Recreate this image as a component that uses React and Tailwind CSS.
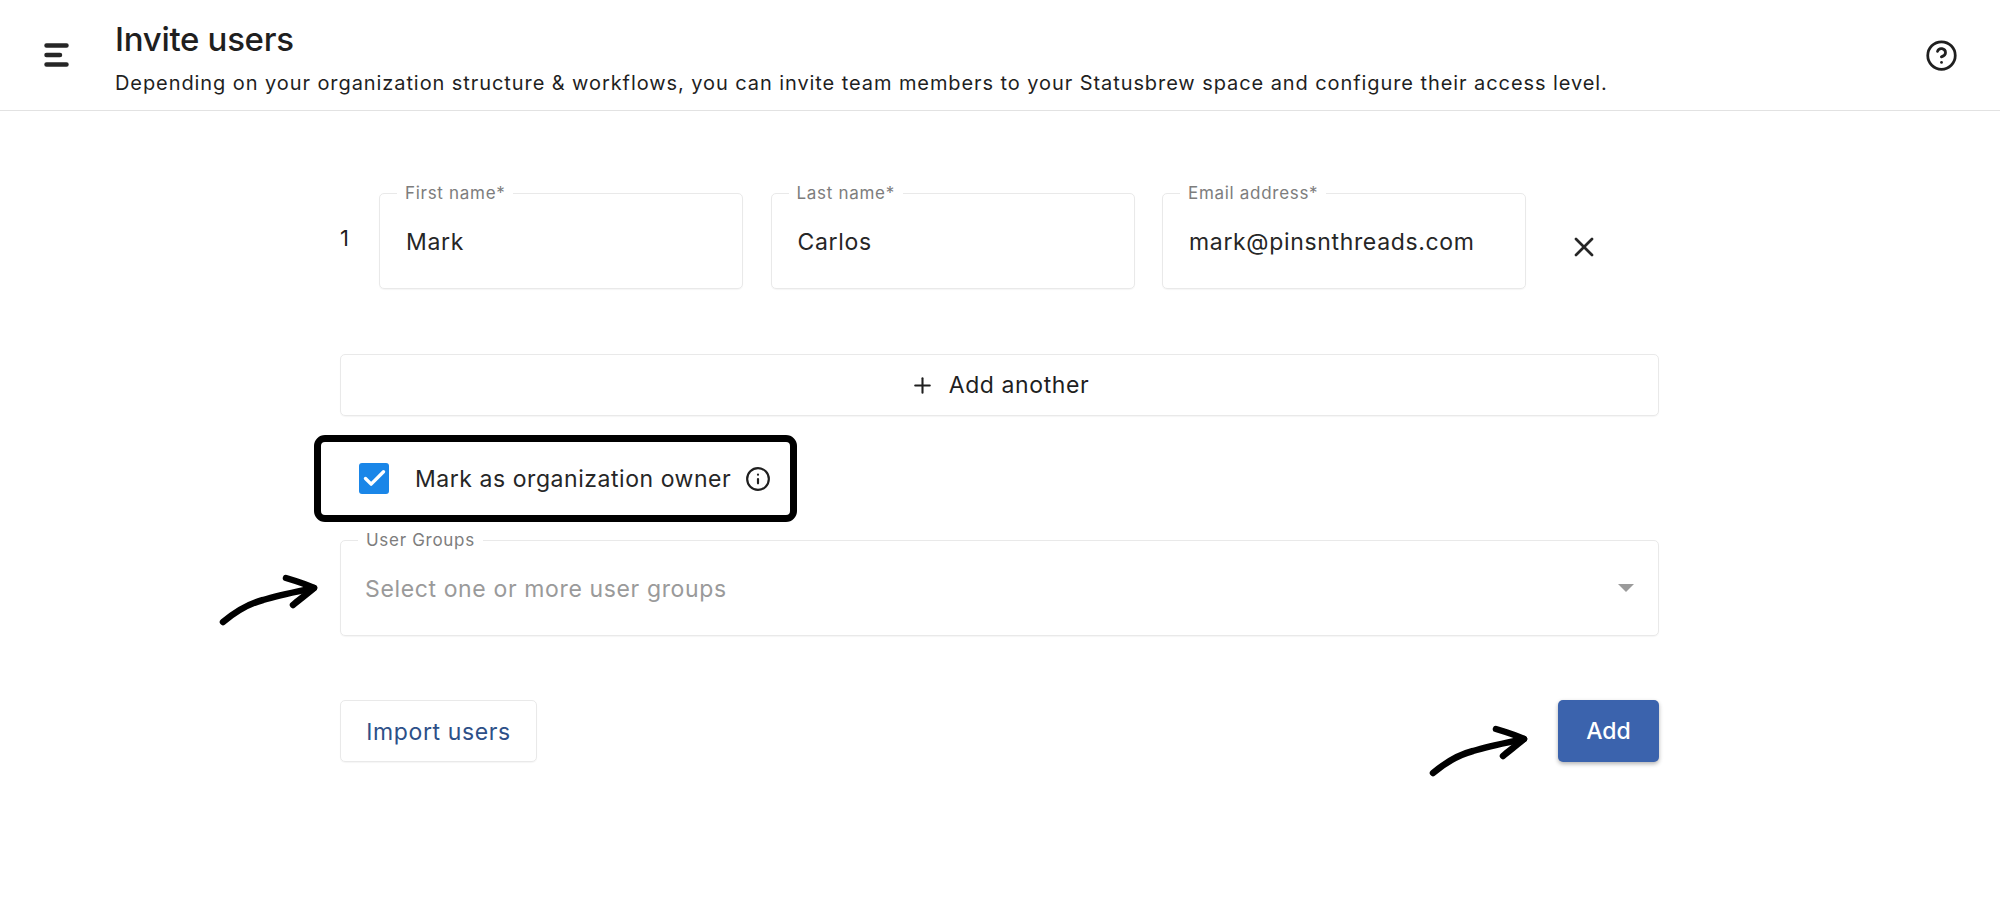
import { X, Plus, CircleHelp, Info, Check } from 'lucide-react';

const Arrow = ({ className }) => (
    <svg className={className} width="100" height="54" viewBox="0 0 100 54" fill="none" stroke="#000" strokeWidth="6.5" strokeLinecap="round" strokeLinejoin="round">
        <path d="M4 49 C16 39 28 31 44 27 C60 22 76 19 95 15" />
        <path d="M67 5 C77 8 87 11 95 15 C88 21 80 27 74 32" />
    </svg>
);

const Field = ({ label, value }) => (
    <div className="relative h-[96px] w-[364px] rounded-[5px] border border-[#e9e9e9] shadow-[0_1px_1px_rgba(0,0,0,0.04)]">
        <label className="absolute -top-[11px] left-[17px] bg-white px-[8px] text-[17px] leading-[20px] tracking-[0.7px] text-[#7d7d7d]">{label}</label>
        <input readOnly value={value} className="h-full w-full bg-transparent pl-[26px] pt-[2px] text-[23px] tracking-[0.66px] text-[#262626] outline-none" />
    </div>
);

const App = () => {
    return (
        <div className="min-h-screen bg-white font-['Inter',sans-serif] text-[#1f1f1f]">
            <header className="flex h-[111px] items-center justify-between border-b border-[#e2e2e2] pl-[44px] pr-[42px]">
                <div className="flex items-center">
                    <svg width="25" height="24" viewBox="0 0 25 24" className="mr-[46px]" fill="none" stroke="#262626" strokeWidth="4.5" strokeLinecap="round">
                        <path d="M2.5 2.5 H22.5 M2.5 12 H16 M2.5 21.5 H22.5" />
                    </svg>
                    <div className="mt-[4px]">
                        <h1 className="text-[33px] font-medium leading-[40px] tracking-[-0.3px]">Invite users</h1>
                        <p className="mt-[12px] text-[20px] leading-[24px] tracking-[0.92px]">Depending on your organization structure &amp; workflows, you can invite team members to your Statusbrew space and configure their access level.</p>
                    </div>
                </div>
                <CircleHelp size={33} strokeWidth={2} className="text-[#1f1f1f]" />
            </header>

            <main className="w-[1659px] pl-[340px] pt-[82px]">
                <div className="flex items-start">
                    <span className="mt-[31px] w-[39px] text-[22px] leading-[28px]">1</span>
                    <div className="flex gap-[27.5px]">
                        <Field label="First name*" value="Mark" />
                        <Field label="Last name*" value="Carlos" />
                        <Field label="Email address*" value="mark@pinsnthreads.com" />
                    </div>
                    <X size={32} strokeWidth={2} className="ml-[42px] mt-[38px] text-[#262626]" />
                </div>

                <button className="mt-[65px] flex h-[62px] w-full items-center justify-center rounded-[5px] border border-[#e9e9e9] pt-[1px] text-[23px] tracking-[0.6px] shadow-[0_1px_1px_rgba(0,0,0,0.04)]">
                    <Plus size={25} strokeWidth={2} className="mr-[14px]" />
                    Add another
                </button>

                <div className="-ml-[26px] mt-[19px] flex h-[87px] w-[483px] items-center rounded-[11px] border-[7px] border-black pl-[38px]">
                    <span className="flex h-[31px] w-[30px] items-center justify-center rounded-[3px] bg-[#1a86e8]">
                        <Check size={27} strokeWidth={3} className="text-white" />
                    </span>
                    <span className="ml-[26px] text-[23px] leading-[28px] tracking-[0.55px] text-[#262626]">Mark as organization owner</span>
                    <Info size={26} strokeWidth={2} className="ml-[14px]" />
                </div>

                <div className="relative mt-[18px] flex h-[96px] items-center justify-between rounded-[5px] border border-[#e9e9e9] pl-[24px] pr-[24px] shadow-[0_1px_1px_rgba(0,0,0,0.04)]">
                    <label className="absolute -top-[11px] left-[17px] bg-white px-[8px] text-[17px] leading-[20px] tracking-[0.7px] text-[#7d7d7d]">User Groups</label>
                    <span className="pt-[2px] text-[23px] tracking-[0.63px] text-[#9a9a9a]">Select one or more user groups</span>
                    <span className="h-0 w-0 border-x-[8px] border-t-[8px] border-x-transparent border-t-[#9b9b9b]" />
                    <Arrow className="absolute -left-[122px] top-[32px]" />
                </div>

                <div className="mt-[64px] flex items-center justify-between">
                    <button className="h-[62px] w-[197px] rounded-[5px] border border-[#e9e9e9] pt-[2px] text-[23px] tracking-[0.6px] text-[#2d5088] shadow-[0_1px_1px_rgba(0,0,0,0.04)]">Import users</button>
                    <div className="relative">
                        <button className="h-[62px] w-[101px] rounded-[5px] bg-[#3b63ad] pt-[1px] text-[23px] font-medium text-white shadow-[0_2px_4px_rgba(0,0,0,0.3)]">Add</button>
                        <Arrow className="absolute -left-[129px] top-[24px]" />
                    </div>
                </div>
            </main>
        </div>
    );
};

export default App;
